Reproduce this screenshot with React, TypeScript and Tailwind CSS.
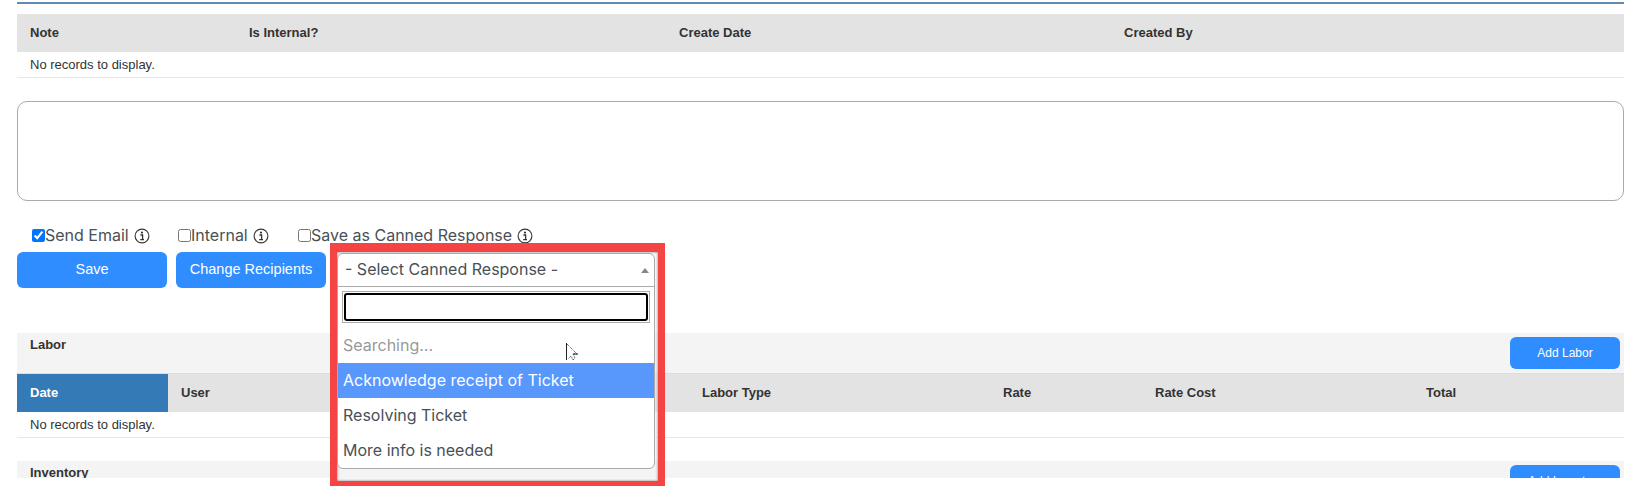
import { CSSProperties } from "react";

const arial = "font-['Liberation_Sans',Arial,sans-serif]";
const inter = "font-['Inter',sans-serif]";

function HeaderCell({ label, w, active }: { label: string; w?: string; active?: boolean }) {
  return (
    <div
      className={`flex h-full items-center pl-[13px] text-[13px] font-bold ${w ?? ""} ${
        active ? "bg-[#337ab7] text-white" : "text-[#333]"
      }`}
    >
      {label}
    </div>
  );
}

function EmptyRow() {
  return (
    <div className="flex h-[26px] items-center border-b border-[#e8e8e8] pl-[13px] text-[13px] text-[#333]">
      No records to display.
    </div>
  );
}

function InfoIcon() {
  return (
    <svg width="16" height="16" viewBox="0 0 16 16" className="ml-[5px] mt-[2px] shrink-0" fill="none">
      <circle cx="8" cy="8" r="6.9" stroke="#333" strokeWidth="1.1" />
      <circle cx="8" cy="4.6" r="1.1" fill="#333" />
      <path d="M6.4 7h2.2v4.4M6.2 11.6h3.8" stroke="#333" strokeWidth="1.3" />
    </svg>
  );
}

function Check({ label, checked, w }: { label: string; checked?: boolean; w: string }) {
  return (
    <label className={`flex items-center text-base text-[#495057] ${inter} ${w}`}>
      <input type="checkbox" defaultChecked={checked} className="m-0 h-[13px] w-[13px] accent-[#0075ff]" />
      <span>{label}</span>
      <InfoIcon />
    </label>
  );
}

function BlueButton({ label, className }: { label: string; className: string }) {
  return (
    <button className={`rounded-[6px] bg-[#308dff] text-white ${arial} ${className}`}>{label}</button>
  );
}

function CannedDropdown() {
  return (
    <div className={`absolute left-[330px] top-[243px] h-[243px] w-[335px] border-x-[7px] border-t-[9px] border-b-[5px] border-[#f44444] bg-[#f4f4f4]/40 shadow-[inset_0_0_3px_#777] ${inter}`}>
      <div className="mt-[1px] flex h-[216px] w-[318px] flex-col rounded-[6px] border border-[#aaa] bg-white text-base text-[#495057]">
        <div className="flex h-[33px] shrink-0 items-center justify-between border-b border-[#aaa] pb-[2px] pl-[7px] pr-[5px]">
          <span>- Select Canned Response -</span>
          <span className="mt-[2px] h-0 w-0 border-x-[4px] border-b-[5px] border-x-transparent border-b-[#888]" />
        </div>
        <div className="mx-[4px] mt-[4px] h-[32px] shrink-0 border border-[#aaa] p-[1px]">
          <div className="h-full rounded-[3px] border-2 border-black bg-white" />
        </div>
        <div className="flex h-[40px] shrink-0 items-center pl-[5px] pt-[4px] text-[#999]">Searching...</div>
        <div className="flex h-[35px] shrink-0 items-center bg-[#5897fb] pb-[2px] pl-[5px] text-white">
          Acknowledge receipt of Ticket
        </div>
        <div className="flex h-[35px] shrink-0 items-center pb-[2px] pl-[5px]">Resolving Ticket</div>
        <div className="flex h-[35px] shrink-0 items-center pb-[2px] pl-[5px]">More info is needed</div>
      </div>
    </div>
  );
}

function Cursor() {
  return (
    <svg width="14" height="20" viewBox="0 0 14 20" className="absolute left-[565px] top-[342px]" fill="none">
      <path d="M1.5 1v17" stroke="#222" strokeWidth="1" />
      <path d="M2 2l10 10H8l2 4-2 2-2-4-3 3" stroke="#333" strokeWidth="1" strokeDasharray="1 1" />
      <path d="M8 12h5" stroke="#222" strokeWidth="1" />
    </svg>
  );
}

export default function App() {
  const clip: CSSProperties = { height: 486 };
  return (
    <div className={`relative w-[1634px] overflow-hidden bg-white ${arial}`} style={clip}>
      <div className="ml-[17px] w-[1607px]">
        <div className="mt-[2px] h-[2px] bg-[#5f8ab8]" />
        <div className="mt-[10px] flex h-[38px] bg-[#e3e3e3]">
          <HeaderCell label="Note" w="w-[219px]" />
          <HeaderCell label="Is Internal?" w="w-[430px]" />
          <HeaderCell label="Create Date" w="w-[445px]" />
          <HeaderCell label="Created By" />
        </div>
        <EmptyRow />

        <div className="mt-[23px] h-[100px] rounded-[10px] border border-[#aaa] bg-white" />

        <div className="mt-[24px] flex h-[20px] pl-[15px]">
          <Check label="Send Email" checked w="w-[146px]" />
          <Check label="Internal" w="w-[120px]" />
          <Check label="Save as Canned Response" w="w-[260px]" />
        </div>
        <div className="mt-[7px] flex gap-[9px]">
          <BlueButton label="Save" className="h-[36px] w-[150px] text-[14.5px]" />
          <BlueButton label="Change Recipients" className="h-[36px] w-[150px] text-[14.5px]" />
        </div>

        <div className="mt-[45px] flex h-[40px] justify-between bg-[#f4f4f4] pl-[13px]">
          <div className="pt-[4px] text-[13px] leading-4 font-bold text-[#333]">Labor</div>
          <BlueButton label="Add Labor" className="mr-[4px] mt-[4px] h-[32px] w-[110px] text-xs" />
        </div>
        <div className="flex h-[39px] border-t border-[#ddd] bg-[#e3e3e3]">
          <HeaderCell label="Date" w="w-[151px]" active />
          <HeaderCell label="User" w="w-[521px]" />
          <HeaderCell label="Labor Type" w="w-[301px]" />
          <HeaderCell label="Rate" w="w-[152px]" />
          <HeaderCell label="Rate Cost" w="w-[271px]" />
          <HeaderCell label="Total" />
        </div>
        <EmptyRow />

        <div className="mt-[23px] flex h-[17px] justify-between overflow-hidden bg-[#f4f4f4] pl-[13px]">
          <div className="pt-[4px] text-[13px] leading-4 font-bold text-[#333]">Inventory</div>
          <BlueButton label="Add Inventory" className="mr-[4px] mt-[4px] h-[32px] w-[110px] shrink-0 text-xs" />
        </div>
      </div>
      <CannedDropdown />
      <Cursor />
    </div>
  );
}
